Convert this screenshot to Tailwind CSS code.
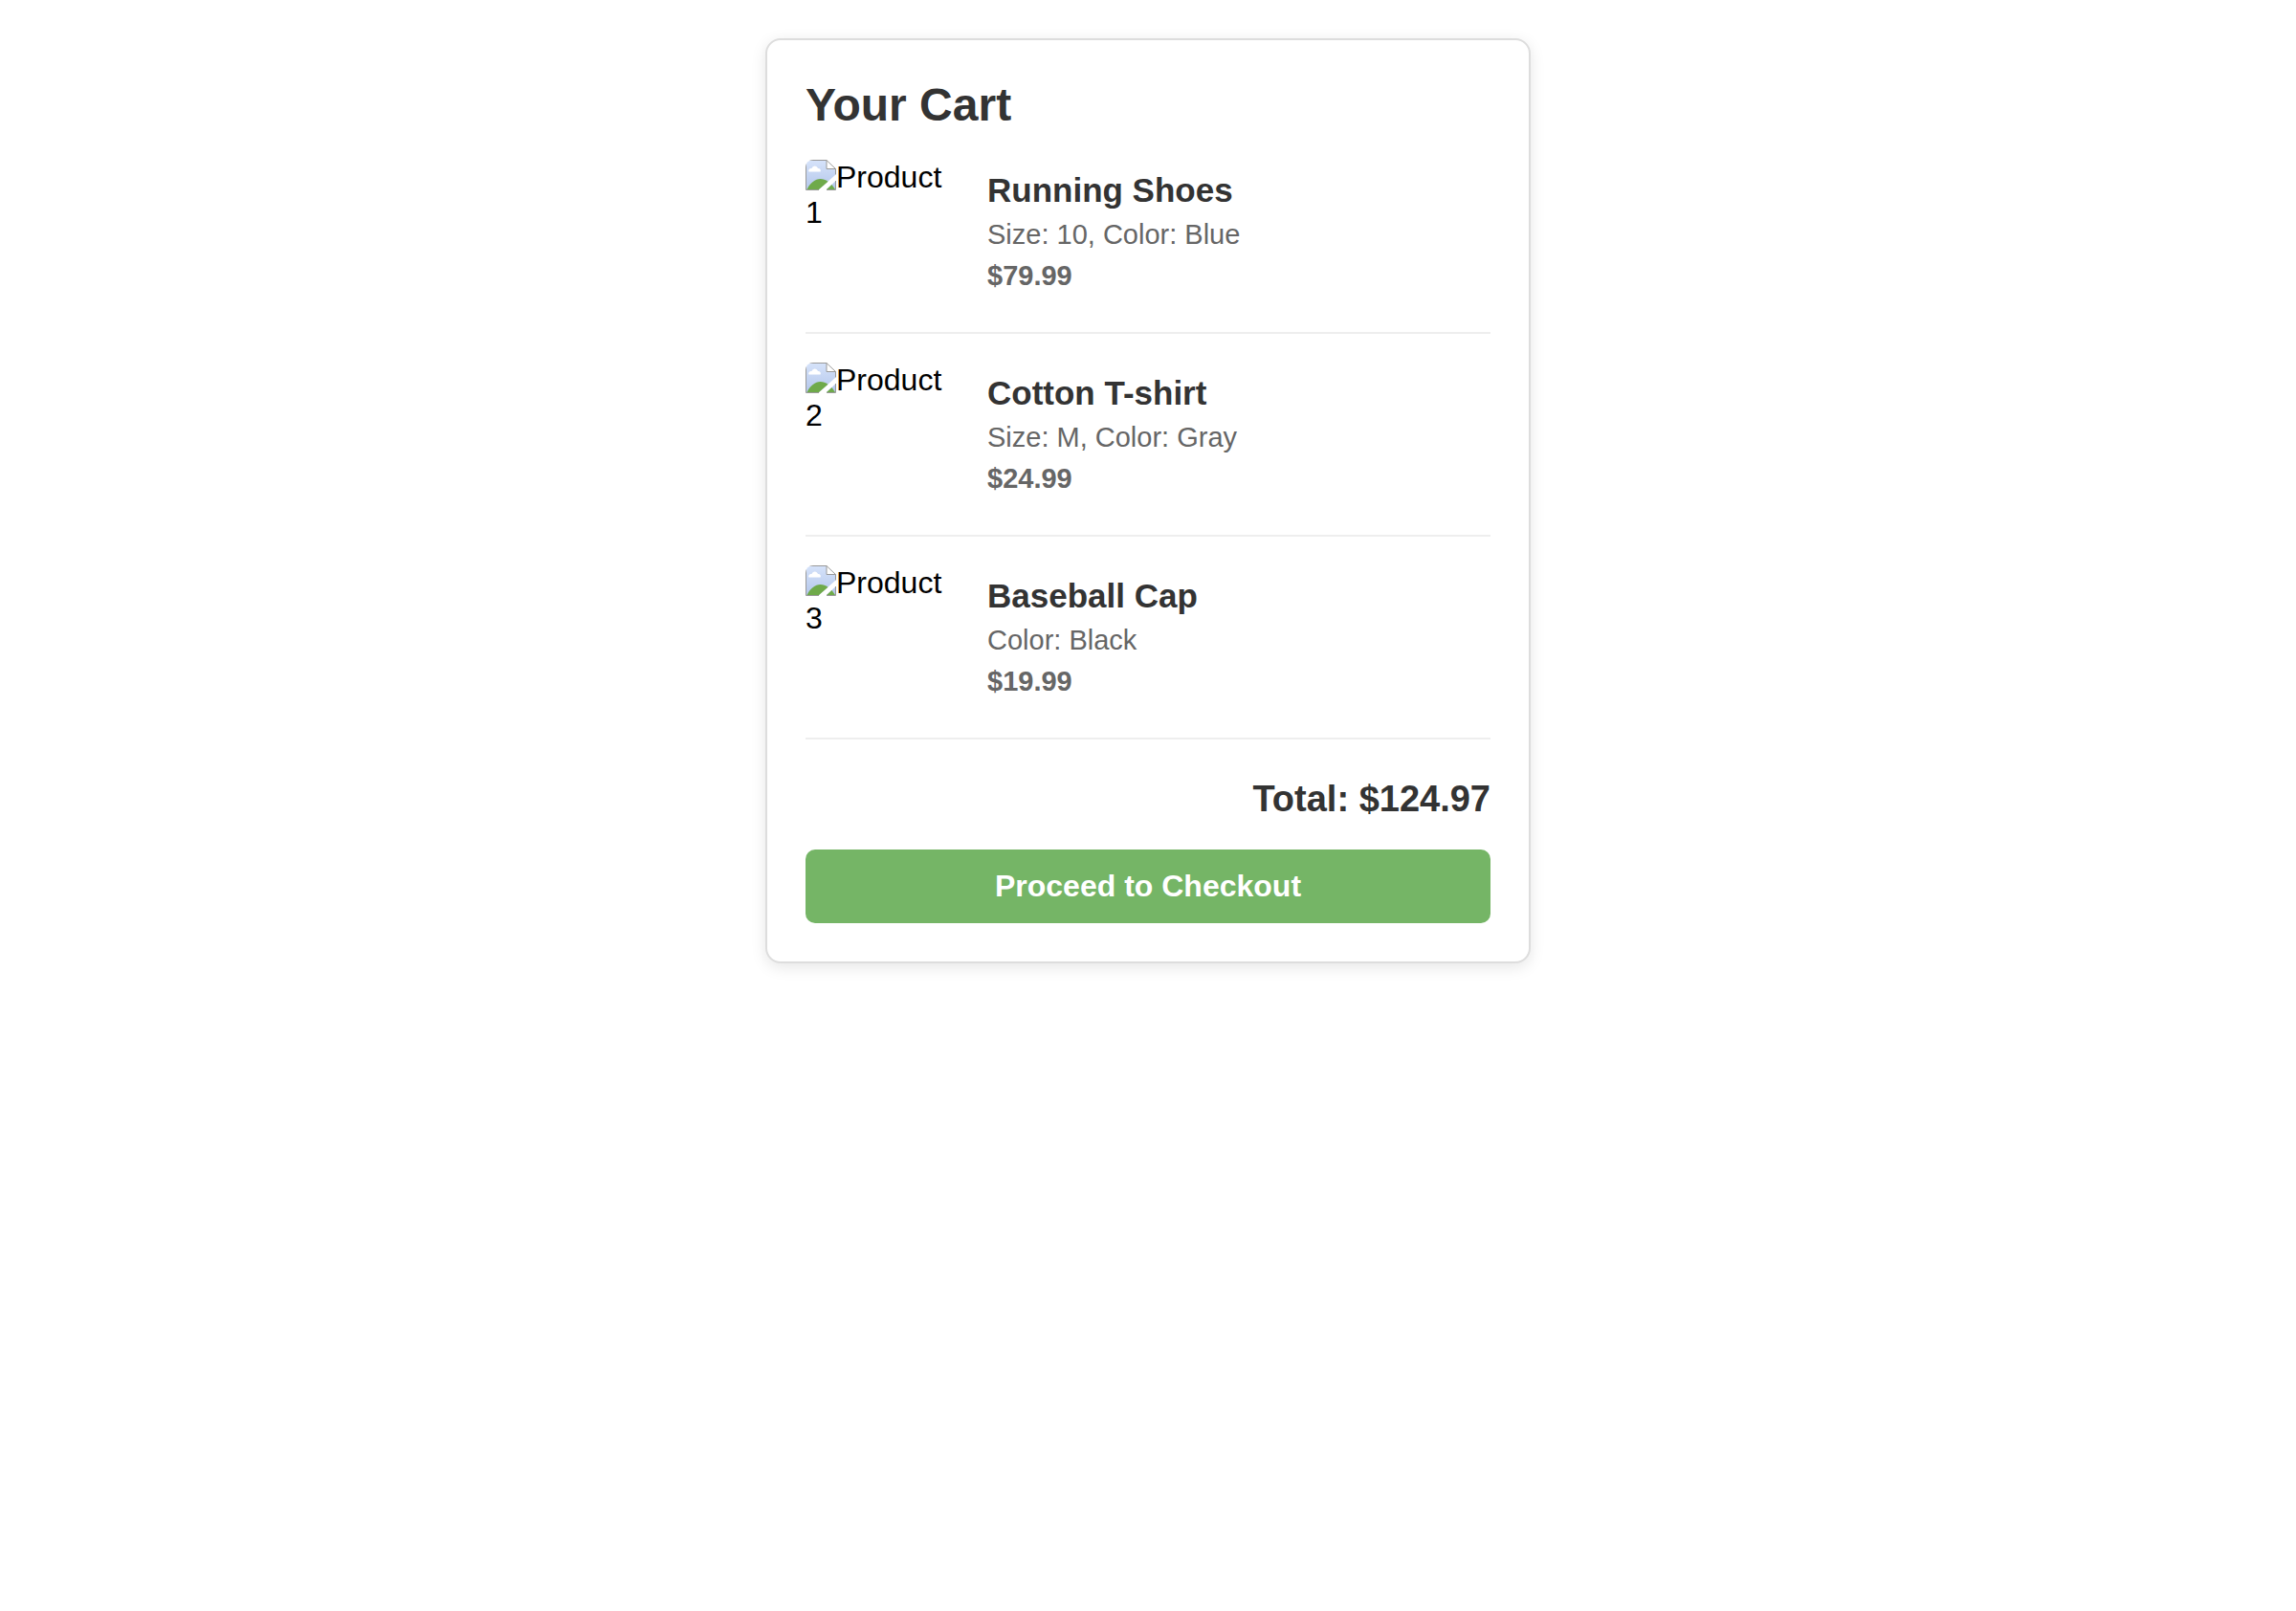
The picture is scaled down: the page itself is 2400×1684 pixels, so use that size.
<!DOCTYPE html>
<html lang="en">
<head>
<meta charset="utf-8">
<meta name="viewport" content="width=device-width, initial-scale=1">
<title>Your Cart</title>
<script src="https://cdn.jsdelivr.net/npm/@tailwindcss/browser@4"></script>
</head>
<body class="bg-white p-10 font-['Helvetica','Liberation_Sans',Arial,sans-serif] text-[32px] leading-[37px] text-black">
<svg class="absolute h-0 w-0" aria-hidden="true">
  <defs>
    <linearGradient id="sky" gradientUnits="userSpaceOnUse" x1="0" y1="0" x2="0" y2="32"><stop offset="0" stop-color="#d6e3fa"/><stop offset="1" stop-color="#b3c6ea"/></linearGradient>
  </defs>
  <symbol id="picture" viewBox="0 0 32 32">
    <path d="M0.500 0.500H22L31.500 9.500V31.500H0.500Z" fill="#fff"/>
    <path d="M1 1H22V9.500H31V16L14 31H1Z" fill="url(#sky)"/>
    <path d="M31 22.500V31H22Z" fill="url(#sky)"/>
    <path d="M22 1L31 9H22Z" fill="#fff"/>
    <path d="M3.500 12.500C2.500 10.500 4.500 8.800 6.500 9C7.500 5.500 12 5.500 13 9C15.500 9 16.500 11 15.500 12.500Z" fill="#fff"/>
    <path d="M1.500 31C5 24 10 20 15.500 20C18.500 20 21 21 23.500 22.800L14 31Z" fill="#6faa4a"/>
    <path d="M27.500 26L31 31H22Z" fill="#6faa4a"/>
    <path d="M14 31.500H0.500V0.500H22L31.500 9.500V15.500M31.500 22V31.500H22M22 0.500V9.500H31.500" fill="none" stroke="#999"/>
  </symbol>
</svg>
<main class="mx-auto max-w-[800px] rounded-2xl border-2 border-[#ddd] bg-white p-10 shadow-[0_4px_16px_rgba(0,0,0,0.1)]">
  <h1 class="mb-[30px] text-[48px] leading-[55px] font-bold text-[#333]">Your Cart</h1>
  <ul>
    <li class="mb-[30px] flex gap-10 border-b-2 border-[#eee] pb-[30px]">
      <div class="h-[150px] w-[150px] shrink-0 overflow-hidden rounded-lg"><svg class="float-left h-8 w-8" aria-hidden="true"><use href="#picture"/></svg>Product 1</div>
      <div class="flex flex-1 flex-col justify-center gap-[10px] text-[29px] leading-[33px] text-[#666]">
        <h2 class="text-[35px] leading-10 font-bold text-[#333]">Running Shoes</h2>
        <p>Size: 10, Color: Blue</p>
        <p class="font-bold">$79.99</p>
      </div>
    </li>
    <li class="mb-[30px] flex gap-10 border-b-2 border-[#eee] pb-[30px]">
      <div class="h-[150px] w-[150px] shrink-0 overflow-hidden rounded-lg"><svg class="float-left h-8 w-8" aria-hidden="true"><use href="#picture"/></svg>Product 2</div>
      <div class="flex flex-1 flex-col justify-center gap-[10px] text-[29px] leading-[33px] text-[#666]">
        <h2 class="text-[35px] leading-10 font-bold text-[#333]">Cotton T-shirt</h2>
        <p>Size: M, Color: Gray</p>
        <p class="font-bold">$24.99</p>
      </div>
    </li>
    <li class="flex gap-10 border-b-2 border-[#eee] pb-[30px]">
      <div class="h-[150px] w-[150px] shrink-0 overflow-hidden rounded-lg"><svg class="float-left h-8 w-8" aria-hidden="true"><use href="#picture"/></svg>Product 3</div>
      <div class="flex flex-1 flex-col justify-center gap-[10px] text-[29px] leading-[33px] text-[#666]">
        <h2 class="text-[35px] leading-10 font-bold text-[#333]">Baseball Cap</h2>
        <p>Color: Black</p>
        <p class="font-bold">$19.99</p>
      </div>
    </li>
  </ul>
  <p class="mt-10 mb-[30px] text-right text-[38px] leading-[45px] font-bold text-[#333]">Total: $124.97</p>
  <button type="button" class="block w-full cursor-pointer rounded-[10px] bg-[#75b566] py-5 font-bold text-white">Proceed to Checkout</button>
</main>
</body>
</html>
